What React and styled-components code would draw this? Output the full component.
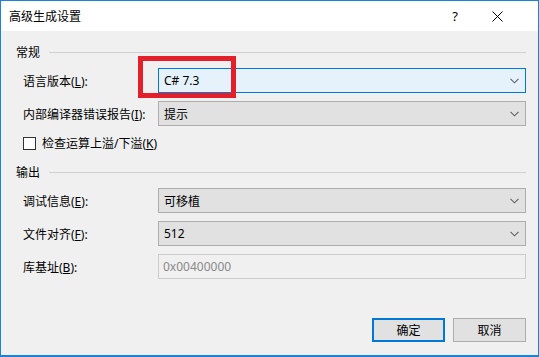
import React from "react";
import styled, { createGlobalStyle } from "styled-components";

const GlobalStyle = createGlobalStyle`
  html, body {
    margin: 0;
    padding: 0;
    background: #ffffff;
  }
  * {
    box-sizing: border-box;
  }
`;

const FONT = `"Noto Sans", "Noto Sans CJK SC", sans-serif`;

const Window = styled.div`
  position: relative;
  width: 539px;
  height: 357px;
  border: 1px solid #1883d7;
  border-bottom-width: 2px;
  display: flex;
  flex-direction: column;
  font-family: ${FONT};
  font-size: 12px;
  color: #000;
  overflow: hidden;
`;

const TitleBar = styled.div`
  height: 30px;
  background: #fff;
  display: flex;
  align-items: center;
  padding: 0 20px 0 8px;
`;

const Title = styled.div`
  flex: 1;
  font-size: 12px;
`;

const CaptionButton = styled.div`
  width: 42px;
  height: 30px;
  display: flex;
  align-items: center;
  justify-content: center;
  font-size: 13px;
`;

const Body = styled.div`
  flex: 1;
  background: #f0f0f0;
  padding: 13px 12px 0 15px;
  display: flex;
  flex-direction: column;
`;

const GroupHeader = styled.div`
  display: flex;
  align-items: center;
  height: 16px;
  margin-top: ${(p) => p.$top || 0}px;
  gap: 9px;
`;

const GroupLine = styled.div`
  flex: 1;
  height: 1px;
  background: #d0d0d0;
`;

const Rows = styled.div`
  display: flex;
  flex-direction: column;
  gap: 8px;
  margin-top: 8px;
  padding-left: 7px;
`;

const Row = styled.div`
  display: grid;
  grid-template-columns: 135px 1fr;
  align-items: center;
  height: 25px;
`;

const Label = styled.div`
  white-space: nowrap;
  span {
    text-decoration: underline;
  }
`;

const Combo = styled.div`
  height: 25px;
  display: flex;
  align-items: center;
  justify-content: space-between;
  padding: 0 6px 0 5px;
  border: 1px solid ${(p) => (p.$focused ? "#0078d7" : "#adadad")};
  background: ${(p) => (p.$focused ? "#e5f1fb" : "#e1e1e1")};
`;

const TextBox = styled.div`
  height: 25px;
  display: flex;
  align-items: center;
  padding-left: 4px;
  border: 1px solid #cccccc;
  background: #f0f0f0;
  color: #8a8a8a;
`;

const CheckRow = styled.div`
  display: flex;
  align-items: center;
  gap: 6px;
  height: 16px;
  margin-top: 1px;
  span {
    text-decoration: underline;
  }
`;

const CheckBox = styled.div`
  width: 13px;
  height: 13px;
  border: 1px solid #333;
  background: #fff;
`;

const Footer = styled.div`
  margin-top: auto;
  margin-bottom: 13px;
  display: flex;
  justify-content: flex-end;
  gap: 8px;
`;

const Button = styled.div`
  width: 73px;
  height: 24px;
  display: flex;
  align-items: center;
  justify-content: center;
  background: #e1e1e1;
  border: ${(p) => (p.$default ? "2px solid #0078d7" : "1px solid #adadad")};
`;

const Highlight = styled.div`
  position: absolute;
  left: 137px;
  top: 55px;
  width: 98px;
  height: 42px;
  border: 5px solid #e3202a;
  pointer-events: none;
`;

const Chevron = () => (
  <svg width="9" height="6" viewBox="0 0 9 6">
    <polyline points="0.5,0.8 4.5,4.8 8.5,0.8" fill="none" stroke="#606060" strokeWidth="1.1" />
  </svg>
);

const CloseIcon = () => (
  <svg width="11" height="11" viewBox="0 0 11 11">
    <path d="M0.5 0.5 L10.5 10.5 M10.5 0.5 L0.5 10.5" stroke="#000" strokeWidth="1" />
  </svg>
);

const App = () => {
  return (
    <>
      <GlobalStyle />
      <Window>
        <TitleBar>
          <Title>高级生成设置</Title>
          <CaptionButton>?</CaptionButton>
          <CaptionButton>
            <CloseIcon />
          </CaptionButton>
        </TitleBar>
        <Body>
          <GroupHeader>
            常规
            <GroupLine />
          </GroupHeader>
          <Rows>
            <Row>
              <Label>
                语言版本(<span>L</span>):
              </Label>
              <Combo $focused>
                C# 7.3
                <Chevron />
              </Combo>
            </Row>
            <Row>
              <Label>
                内部编译器错误报告(<span>I</span>):
              </Label>
              <Combo>
                提示
                <Chevron />
              </Combo>
            </Row>
            <CheckRow>
              <CheckBox />
              <div>
                检查运算上溢/下溢(<span>K</span>)
              </div>
            </CheckRow>
          </Rows>
          <GroupHeader $top={13}>
            输出
            <GroupLine />
          </GroupHeader>
          <Rows>
            <Row>
              <Label>
                调试信息(<span>E</span>):
              </Label>
              <Combo>
                可移植
                <Chevron />
              </Combo>
            </Row>
            <Row>
              <Label>
                文件对齐(<span>F</span>):
              </Label>
              <Combo>
                512
                <Chevron />
              </Combo>
            </Row>
            <Row>
              <Label>
                库基址(<span>B</span>):
              </Label>
              <TextBox>0x00400000</TextBox>
            </Row>
          </Rows>
          <Footer>
            <Button $default>确定</Button>
            <Button>取消</Button>
          </Footer>
        </Body>
        <Highlight />
      </Window>
    </>
  );
};

export default App;
